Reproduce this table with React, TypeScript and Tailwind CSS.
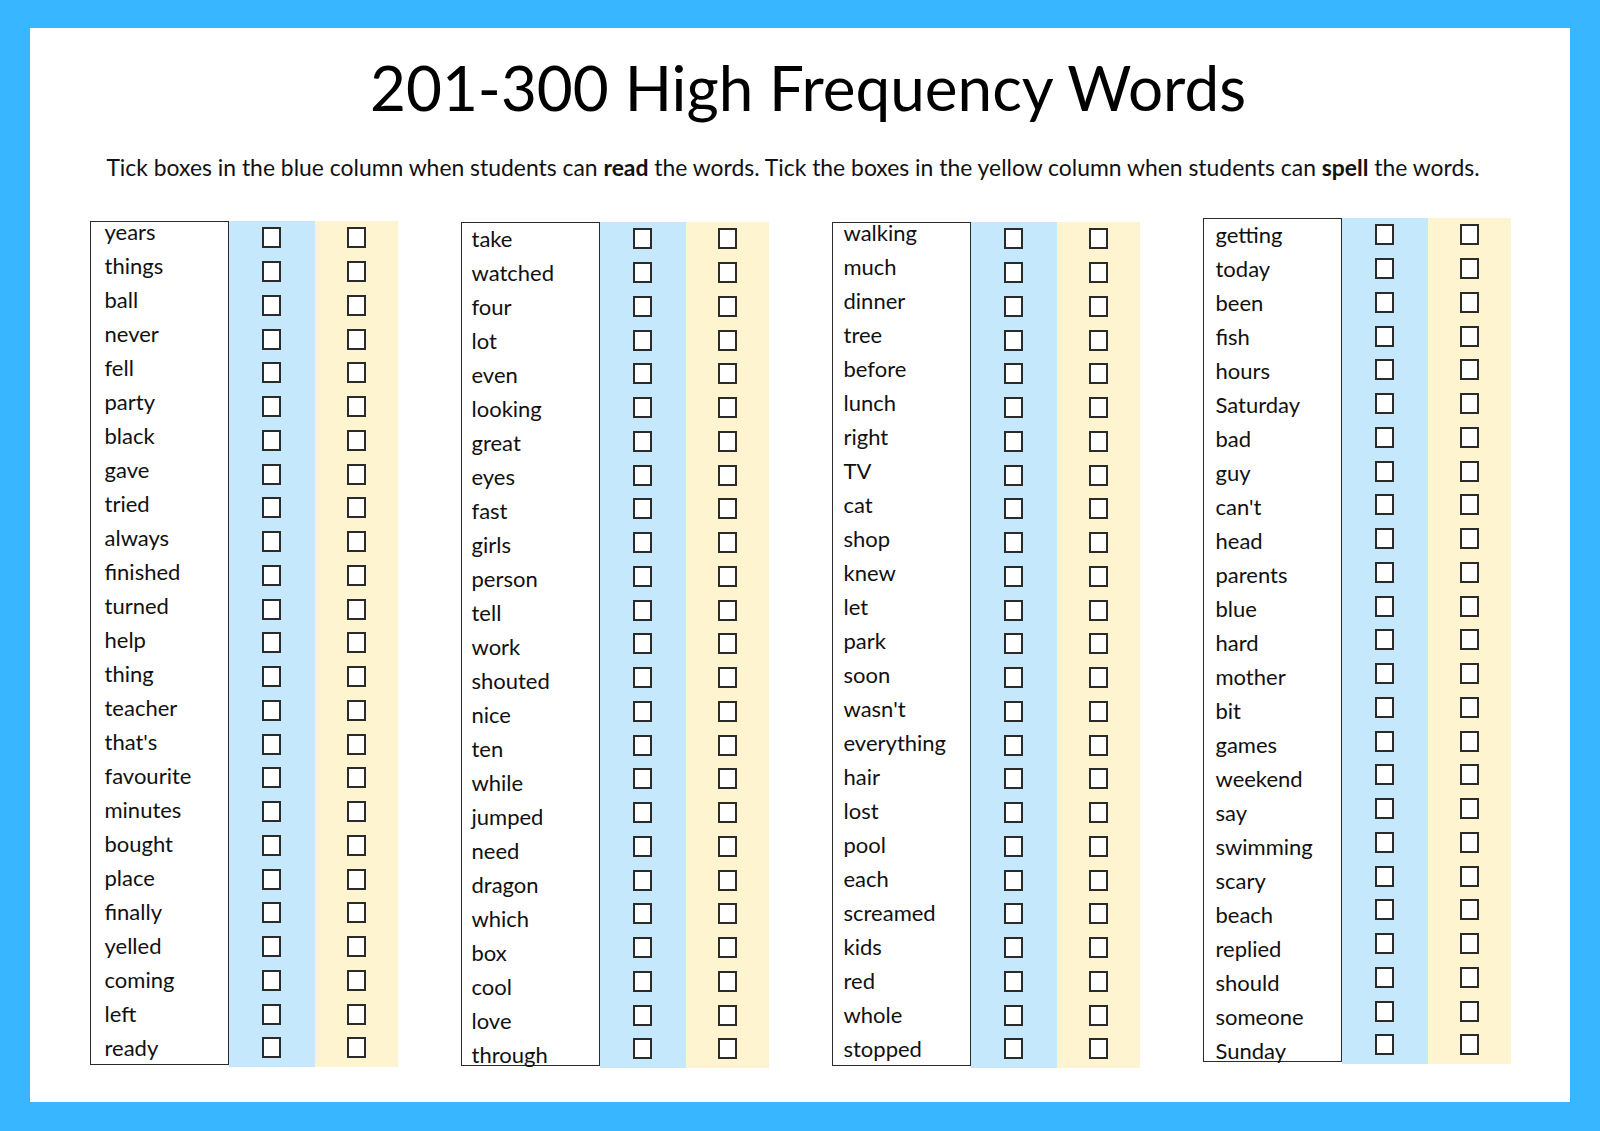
const columns = [
  {
    words: ["years", "things", "ball", "never", "fell", "party", "black", "gave", "tried", "always", "finished", "turned", "help", "thing", "teacher", "that's", "favourite", "minutes", "bought", "place", "finally", "yelled", "coming", "left", "ready"],
    top: "mt-0",
    pad: "pl-[14px] -mt-[7px]",
  },
  {
    words: ["take", "watched", "four", "lot", "even", "looking", "great", "eyes", "fast", "girls", "person", "tell", "work", "shouted", "nice", "ten", "while", "jumped", "need", "dragon", "which", "box", "cool", "love", "through"],
    top: "mt-[1px]",
    pad: "pl-[10px] -mt-[1px]",
  },
  {
    words: ["walking", "much", "dinner", "tree", "before", "lunch", "right", "TV", "cat", "shop", "knew", "let", "park", "soon", "wasn't", "everything", "hair", "lost", "pool", "each", "screamed", "kids", "red", "whole", "stopped"],
    top: "mt-[1px]",
    pad: "pl-[11px] -mt-[7px]",
  },
  {
    words: ["getting", "today", "been", "fish", "hours", "Saturday", "bad", "guy", "can't", "head", "parents", "blue", "hard", "mother", "bit", "games", "weekend", "say", "swimming", "scary", "beach", "replied", "should", "someone", "Sunday"],
    top: "-mt-[3px]",
    pad: "pl-[12px] -mt-[1px]",
  },
];

function Tick() {
  return (
    <div className="h-[33.76px] flex items-center justify-center">
      <div className="w-[19px] h-[21px] border-2 border-[#2b2b2b] bg-white" />
    </div>
  );
}

function WordColumn({ words, top, pad }: { words: string[]; top: string; pad: string }) {
  return (
    <div className={`flex ${top}`}>
      <div className="w-[139px] h-[844px] border-[1.5px] border-[#2b2b2b] bg-white">
        <div className={pad}>
          {words.map((w) => (
            <div key={w} className="h-[34px] leading-[34px] text-[22px] text-[#111] whitespace-nowrap">
              {w}
            </div>
          ))}
        </div>
      </div>
      <div className="w-[86px] h-[846px] bg-[#c5e8fc]">
        {words.map((w) => (
          <Tick key={w} />
        ))}
      </div>
      <div className="w-[83px] h-[846px] bg-[#fff4d0]">
        {words.map((w) => (
          <Tick key={w} />
        ))}
      </div>
    </div>
  );
}

export default function App() {
  return (
    <div className="w-[1600px] h-[1131px] bg-[#38b6ff] pt-[28px] pl-[30px] pr-[30px] pb-[29px] font-[Lato,sans-serif]">
      <div className="w-full h-full bg-white flex flex-col items-center">
        <h1 className="mt-[28px] ml-[16px] text-[62px] leading-none text-black font-normal">
          201-300 High Frequency Words
        </h1>
        <p className="mt-[38px] mr-[14px] text-[22.9px] leading-none text-[#111]">
          Tick boxes in the blue column when students can <b>read</b> the words. Tick the boxes in the yellow column when students can <b>spell</b> the words.
        </p>
        <div className="mt-[42px] flex items-start gap-[63px]">
          {columns.map((c, i) => (
            <WordColumn key={i} words={c.words} top={c.top} pad={c.pad} />
          ))}
        </div>
      </div>
    </div>
  );
}
